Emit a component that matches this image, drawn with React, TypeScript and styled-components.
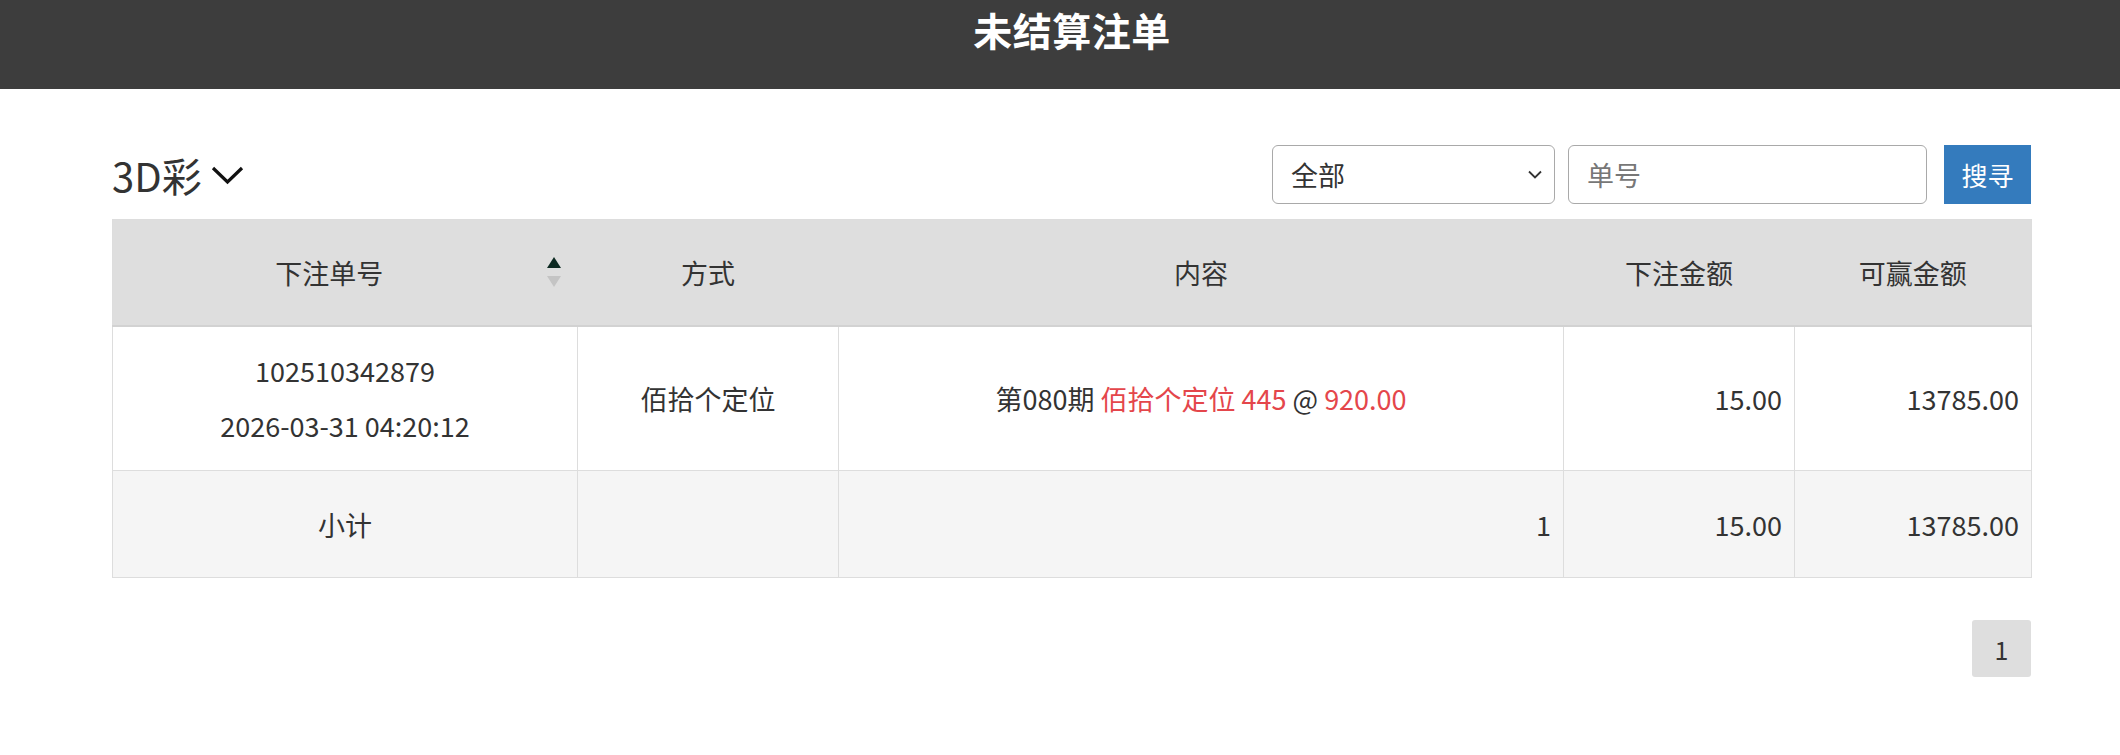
import React from "react";
import styled, { createGlobalStyle } from "styled-components";

const GlobalStyle = createGlobalStyle`
  html, body { margin: 0; padding: 0; background: #fff; }
  body {
    font-family: "Noto Sans CJK SC", "Noto Sans", "Liberation Sans", sans-serif;
    color: #333;
  }
  * { box-sizing: border-box; }
`;

const TopBar = styled.header`
  height: 89px;
  background: #3d3d3d;
  display: flex;
  justify-content: center;
  align-items: flex-start;
  padding: 5px 0 0 24px;
`;

const Title = styled.h1`
  margin: 0;
  color: #fff;
  font-size: 39px;
  line-height: 48px;
  font-weight: 700;
  letter-spacing: 0.5px;
`;

const Main = styled.main`
  padding: 56px 89px 0 112px;
`;

const Toolbar = styled.div`
  display: flex;
  align-items: center;
  justify-content: space-between;
  height: 59px;
  margin-bottom: 15px;
`;

const GameName = styled.div`
  display: flex;
  align-items: center;
  gap: 9px;
  font-size: 40px;
  line-height: 1;
  color: #333;
`;

const Filters = styled.div`
  display: flex;
  align-items: center;
`;

const SelectBox = styled.div`
  position: relative;
  width: 283px;
  height: 59px;
  border: 1px solid #a9a9a9;
  border-radius: 6px;
  display: flex;
  align-items: center;
  padding-left: 18px;
  font-size: 27px;
  color: #333;
  margin-right: 13px;
`;

const SelectArrow = styled.svg`
  position: absolute;
  right: 12px;
  top: 50%;
  margin-top: -5px;
`;

const SearchInput = styled.input`
  width: 359px;
  height: 59px;
  border: 1px solid #a9a9a9;
  border-radius: 6px;
  padding: 0 18px;
  font-family: inherit;
  font-size: 27px;
  color: #333;
  margin-right: 17px;
  outline: none;
  &::placeholder { color: #777; }
`;

const SearchButton = styled.button`
  width: 87px;
  height: 59px;
  border: none;
  background: #347bbd;
  color: #fff;
  font-family: inherit;
  font-size: 26px;
  padding: 0;
`;

const Table = styled.table`
  width: 100%;
  border-collapse: collapse;
  table-layout: fixed;
  border: 1px solid #ddd;
  font-size: 27px;
`;

const HeadCell = styled.th<{ $sort?: boolean }>`
  position: relative;
  background: #dedede;
  height: 106px;
  font-weight: normal;
  text-align: center;
  color: #333;
  border-bottom: 2px solid #d2d2d2;
  padding: 0 ${(p) => (p.$sort ? "40px" : "8px")} 0 8px;
`;

const SortIcon = styled.span`
  position: absolute;
  right: 17px;
  top: 50%;
  transform: translateY(-50%);
  display: flex;
  flex-direction: column;
  align-items: center;
  gap: 8px;
`;

const Tri = styled.span<{ $up?: boolean; $active?: boolean }>`
  width: 0;
  height: 0;
  border-left: 7px solid transparent;
  border-right: 7px solid transparent;
  ${(p) =>
    p.$up
      ? `border-bottom: 11px solid ${p.$active ? "#0d2a22" : "#bbb"};`
      : `border-top: 11px solid ${p.$active ? "#0d2a22" : "#c4c4c4"};`}
`;

const Cell = styled.td<{ $align?: "left" | "center" | "right"; $sub?: boolean }>`
  border: 1px solid #ddd;
  text-align: ${(p) => p.$align || "center"};
  padding: 0 ${(p) => (p.$align === "right" ? "12px" : "8px")} 0 8px;
  height: ${(p) => (p.$sub ? "107px" : "145px")};
  background: ${(p) => (p.$sub ? "#f5f5f5" : "#fff")};
  color: #333;
  white-space: nowrap;
`;

const Line = styled.div`
  line-height: 34px;
  & + & { margin-top: 21px; }
`;

const Red = styled.span`
  color: #e4464b;
`;

const Pager = styled.div`
  display: flex;
  justify-content: flex-end;
  margin-top: 42px;
`;

const PageItem = styled.span`
  width: 59px;
  height: 57px;
  background: #dedede;
  border-radius: 3px;
  display: flex;
  align-items: center;
  justify-content: center;
  font-size: 25px;
  color: #333;
`;

const cols = [465, 261, 725, 231, 237];

export default function App() {
  return (
    <>
      <GlobalStyle />
      <TopBar>
        <Title>未结算注单</Title>
      </TopBar>
      <Main>
        <Toolbar>
          <GameName>
            3D彩
            <svg width="33" height="20" viewBox="0 0 33 20">
              <path d="M2 3 L16.5 17 L31 3" fill="none" stroke="#111" strokeWidth="3.2" />
            </svg>
          </GameName>
          <Filters>
            <SelectBox>
              全部
              <SelectArrow width="14" height="9" viewBox="0 0 14 9">
                <path d="M1 1.5 L7 7.5 L13 1.5" fill="none" stroke="#333" strokeWidth="1.8" />
              </SelectArrow>
            </SelectBox>
            <SearchInput placeholder="单号" />
            <SearchButton>搜寻</SearchButton>
          </Filters>
        </Toolbar>
        <Table>
          <colgroup>
            {cols.map((w, i) => (
              <col key={i} style={{ width: w }} />
            ))}
          </colgroup>
          <thead>
            <tr>
              <HeadCell $sort>
                下注单号
                <SortIcon>
                  <Tri $up $active />
                  <Tri />
                </SortIcon>
              </HeadCell>
              <HeadCell>方式</HeadCell>
              <HeadCell>内容</HeadCell>
              <HeadCell>下注金额</HeadCell>
              <HeadCell>可赢金额</HeadCell>
            </tr>
          </thead>
          <tbody>
            <tr>
              <Cell>
                <Line>102510342879</Line>
                <Line>2026-03-31 04:20:12</Line>
              </Cell>
              <Cell>佰拾个定位</Cell>
              <Cell>
                第080期 <Red>佰拾个定位</Red> <Red>445</Red> @ <Red>920.00</Red>
              </Cell>
              <Cell $align="right">15.00</Cell>
              <Cell $align="right">13785.00</Cell>
            </tr>
            <tr>
              <Cell $sub>小计</Cell>
              <Cell $sub></Cell>
              <Cell $sub $align="right">1</Cell>
              <Cell $sub $align="right">15.00</Cell>
              <Cell $sub $align="right">13785.00</Cell>
            </tr>
          </tbody>
        </Table>
        <Pager>
          <PageItem>1</PageItem>
        </Pager>
      </Main>
    </>
  );
}
